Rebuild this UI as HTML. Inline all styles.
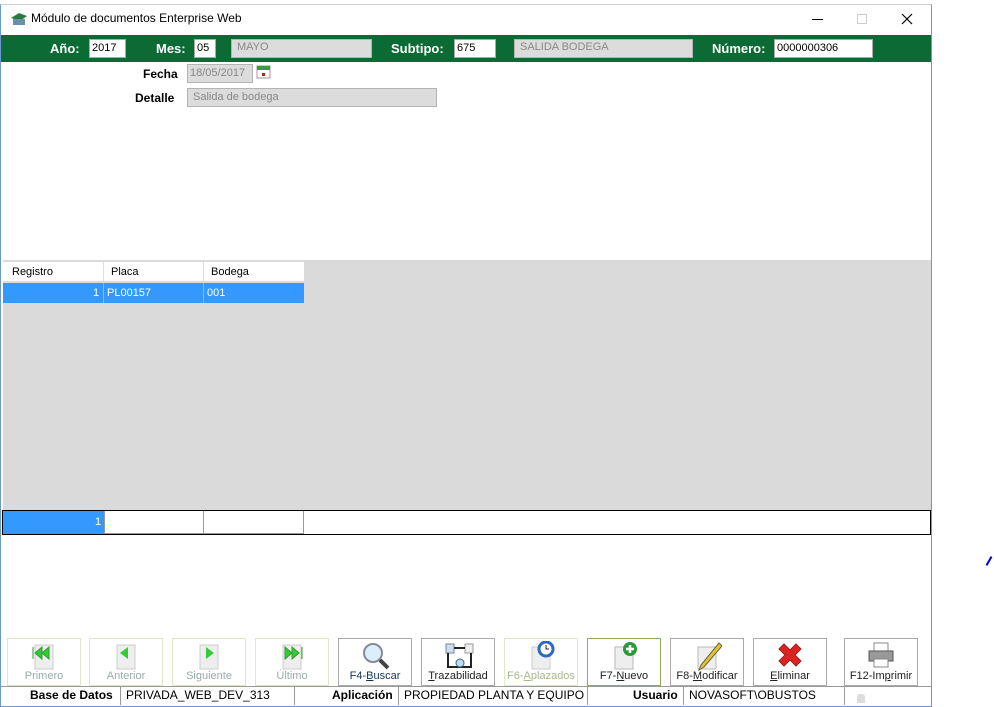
<!DOCTYPE html>
<html><head><meta charset="utf-8"><style>
*{margin:0;padding:0;box-sizing:border-box}
body{width:994px;height:707px;background:#fff;position:relative;overflow:hidden;font-family:"Liberation Sans",sans-serif;font-size:11px}
.a{position:absolute}
.win{left:0;top:4px;width:932px;height:703px;border:1px solid #6a9bd0;border-top:1px solid #cfcfcf;background:#fff}
.lbl{color:#fff;font-weight:bold;font-size:13px}
.in{background:#fff;border:1px solid #aaa;height:19px;font-size:11px;padding:2px 2px;color:#000}
.dis{background:#dcdcdc;border:1px solid #b4b4b4;color:#888;font-size:11px;padding:2px 5px;height:19px}
.btn{top:638px;width:74px;height:48px;border:1px solid #aaa;background:#fff;text-align:center;font-size:11px;color:#222}
.btn.d{border-color:#e0e6c8;color:#9aa}
.btn span{position:absolute;bottom:3px;left:0;right:0}
.btn svg{position:absolute;left:21px;top:2px}
.st{top:686px;height:19px;font-size:12px;line-height:19px}
</style></head><body>
<div class="a win"></div>
<div class="a" style="left:0;top:0;width:994px;height:4px;background:#fff"></div>
<svg class="a" style="left:10px;top:12px" width="18" height="14"><path d="M1 6 L9 1 L17 4 L10 9Z" fill="#2a7a3a"/><rect x="3" y="7" width="12" height="6" fill="#6b8fb0"/></svg>
<div class="a" style="left:31px;top:11px;font-size:12px">Módulo de documentos Enterprise Web</div>
<div class="a" style="left:812px;top:19px;width:11px;height:1px;background:#000"></div>
<div class="a" style="left:857px;top:14px;width:10px;height:10px;border:1px solid #ccc"></div>
<svg class="a" style="left:901px;top:13px" width="12" height="12"><path d="M1 1L11 11M11 1L1 11" stroke="#000" stroke-width="1.2"/></svg>
<div class="a" style="left:1px;top:35px;width:930px;height:27px;background:#0c6b34"></div>
<div class="a lbl" style="left:50px;top:41px">Año:</div>
<div class="a in" style="left:89px;top:39px;width:37px">2017</div>
<div class="a lbl" style="left:156px;top:41px">Mes:</div>
<div class="a in" style="left:194px;top:39px;width:22px">05</div>
<div class="a dis" style="left:231px;top:39px;width:141px;padding-top:1px">MAYO</div>
<div class="a lbl" style="left:391px;top:41px">Subtipo:</div>
<div class="a in" style="left:454px;top:39px;width:42px">675</div>
<div class="a dis" style="left:514px;top:39px;width:179px;padding-top:1px">SALIDA BODEGA</div>
<div class="a lbl" style="left:712px;top:41px">Número:</div>
<div class="a in" style="left:774px;top:39px;width:99px">0000000306</div>
<div class="a" style="left:143px;top:67px;font-weight:bold;font-size:12px">Fecha</div>
<div class="a dis" style="left:187px;top:64px;width:66px;padding:2px 2px">18/05/2017</div>
<svg class="a" style="left:256px;top:64px" width="15" height="15"><rect x="1" y="2" width="13" height="12" fill="#fff" stroke="#999"/><rect x="1" y="2" width="13" height="4" fill="#3a9a4a"/><rect x="6" y="9" width="3" height="3" fill="#b22"/></svg>
<div class="a" style="left:135px;top:91px;font-weight:bold;font-size:12px">Detalle</div>
<div class="a dis" style="left:187px;top:88px;width:250px;padding:2px 5px">Salida de bodega</div>
<div class="a" style="left:3px;top:260px;width:928px;height:250px;background:#dadada"></div>
<div class="a" style="left:3px;top:262px;width:301px;height:20px;background:#fff;border-bottom:1px solid #ddd"></div>
<div class="a" style="left:12px;top:266px">Registro</div>
<div class="a" style="left:103px;top:262px;width:1px;height:41px;background:#ddd"></div>
<div class="a" style="left:111px;top:266px">Placa</div>
<div class="a" style="left:203px;top:262px;width:1px;height:41px;background:#ddd"></div>
<div class="a" style="left:211px;top:266px">Bodega</div>
<div class="a" style="left:3px;top:283px;width:301px;height:20px;background:#3399ff"></div>
<div class="a" style="left:103px;top:283px;width:1px;height:20px;background:#8cbcec"></div>
<div class="a" style="left:203px;top:283px;width:1px;height:20px;background:#8cbcec"></div>
<div class="a" style="left:93px;top:287px;color:#fff">1</div>
<div class="a" style="left:107px;top:287px;color:#fff">PL00157</div>
<div class="a" style="left:207px;top:287px;color:#fff">001</div>
<div class="a" style="left:2px;top:510px;width:929px;height:25px;border:1px solid #000;background:#fff"></div>
<div class="a" style="left:3px;top:511px;width:101px;height:23px;background:#3399ff"></div>
<div class="a" style="left:95px;top:516px;color:#fff">1</div>
<div class="a" style="left:104px;top:511px;width:100px;height:23px;border-right:1px solid #999;border-left:1px solid #999;border-bottom:1px solid #999"></div>
<div class="a" style="left:204px;top:511px;width:100px;height:23px;border-right:1px solid #999;border-bottom:1px solid #999"></div>
<div class="a" style="left:988px;top:556px;width:2px;height:10px;background:#00c;transform:rotate(30deg)"></div>

<div class="a btn d" style="left:7px"><svg width="30" height="32"><rect x="6" y="4" width="18" height="24" fill="#eee" stroke="#ccc"/><path d="M4 6v12M20 6l-7 6 7 6zM13 6l-7 6 7 6z" fill="#3c3" stroke="#393"/></svg><span>Primero</span></div>
<div class="a btn d" style="left:89px"><svg width="30" height="32"><rect x="6" y="4" width="18" height="24" fill="#eee" stroke="#ccc"/><path d="M17 6l-8 6 8 6z" fill="#3c3"/></svg><span>Anterior</span></div>
<div class="a btn d" style="left:172px"><svg width="30" height="32"><rect x="6" y="4" width="18" height="24" fill="#eee" stroke="#ccc"/><path d="M12 6l8 6-8 6z" fill="#3c3"/></svg><span>Siguiente</span></div>
<div class="a btn d" style="left:255px"><svg width="30" height="32"><rect x="6" y="4" width="18" height="24" fill="#eee" stroke="#ccc"/><path d="M8 6l7 6-7 6zM15 6l7 6-7 6zM25 6v12" fill="#3c3" stroke="#393"/></svg><span>Último</span></div>
<div class="a btn" style="left:338px"><svg width="34" height="32"><circle cx="13" cy="12" r="9" fill="#dbeefa" stroke="#889" stroke-width="2"/><path d="M20 19l8 8" stroke="#444" stroke-width="4"/></svg><span style="color:#135">F4-<u>B</u>uscar</span></div>
<div class="a btn" style="left:421px"><svg width="34" height="32"><rect x="3" y="3" width="8" height="9" fill="#cde" stroke="#789"/><rect x="22" y="3" width="8" height="9" fill="#eee" stroke="#999"/><path d="M11 7h11M5 12v14h23V12" stroke="#222" fill="none" stroke-width="2"/><circle cx="17" cy="22" r="4" fill="#bde" stroke="#468"/></svg><span><u>T</u>razabilidad</span></div>
<div class="a btn d" style="left:504px"><svg width="30" height="32"><rect x="6" y="6" width="18" height="22" fill="#eee" stroke="#ccc"/><circle cx="20" cy="8" r="7" fill="#fff" stroke="#2a6ac0" stroke-width="3"/><path d="M20 4v4h3" stroke="#222" fill="none"/></svg><span style="color:#a9b68c">F6-<u>A</u>plazados</span></div>
<div class="a btn" style="left:587px;border-color:#8cac5a"><svg width="30" height="32"><rect x="6" y="6" width="18" height="22" fill="#eee" stroke="#bbb"/><circle cx="21" cy="8" r="7" fill="#2a9a3a"/><path d="M21 4v8M17 8h8" stroke="#fff" stroke-width="2.5"/></svg><span>F7-<u>N</u>uevo</span></div>
<div class="a btn" style="left:670px"><svg width="30" height="32"><rect x="6" y="6" width="18" height="22" fill="#eee" stroke="#bbb"/><path d="M27 2L9 24l-2 5 5-3L30 5z" fill="#e8c030" stroke="#664"/></svg><span>F8-<u>M</u>odificar</span></div>
<div class="a btn" style="left:753px"><svg width="30" height="32"><path d="M4 8l5-5 6 6 6-6 5 5-6 6 6 6-5 5-6-6-6 6-5-5 6-6z" fill="#d22" stroke="#922"/></svg><span><u>E</u>liminar</span></div>
<div class="a btn" style="left:844px"><svg width="30" height="32"><rect x="8" y="2" width="14" height="9" fill="#fff" stroke="#888"/><rect x="3" y="10" width="24" height="10" fill="#999" stroke="#555"/><rect x="8" y="18" width="14" height="8" fill="#fff" stroke="#888"/></svg><span>F12-Im<u>p</u>rimir</span></div>

<div class="a" style="left:1px;top:686px;width:930px;height:1px;background:#999"></div>
<div class="a st" style="left:30px;font-weight:bold">Base de Datos</div>
<div class="a" style="left:120px;top:687px;width:1px;height:18px;background:#999"></div>
<div class="a st" style="left:126px">PRIVADA_WEB_DEV_313</div>
<div class="a" style="left:294px;top:687px;width:1px;height:18px;background:#999"></div>
<div class="a st" style="left:332px;font-weight:bold">Aplicación</div>
<div class="a" style="left:398px;top:687px;width:1px;height:18px;background:#999"></div>
<div class="a st" style="left:404px">PROPIEDAD PLANTA Y EQUIPO</div>
<div class="a" style="left:587px;top:687px;width:1px;height:18px;background:#999"></div>
<div class="a st" style="left:633px;font-weight:bold">Usuario</div>
<div class="a" style="left:683px;top:687px;width:1px;height:18px;background:#999"></div>
<div class="a st" style="left:689px">NOVASOFT\OBUSTOS</div>
<div class="a" style="left:844px;top:687px;width:1px;height:18px;background:#999"></div>
<div class="a" style="left:857px;top:694px;width:8px;height:9px;background:#ddd;border-radius:3px 3px 0 0"></div>
</body></html>
